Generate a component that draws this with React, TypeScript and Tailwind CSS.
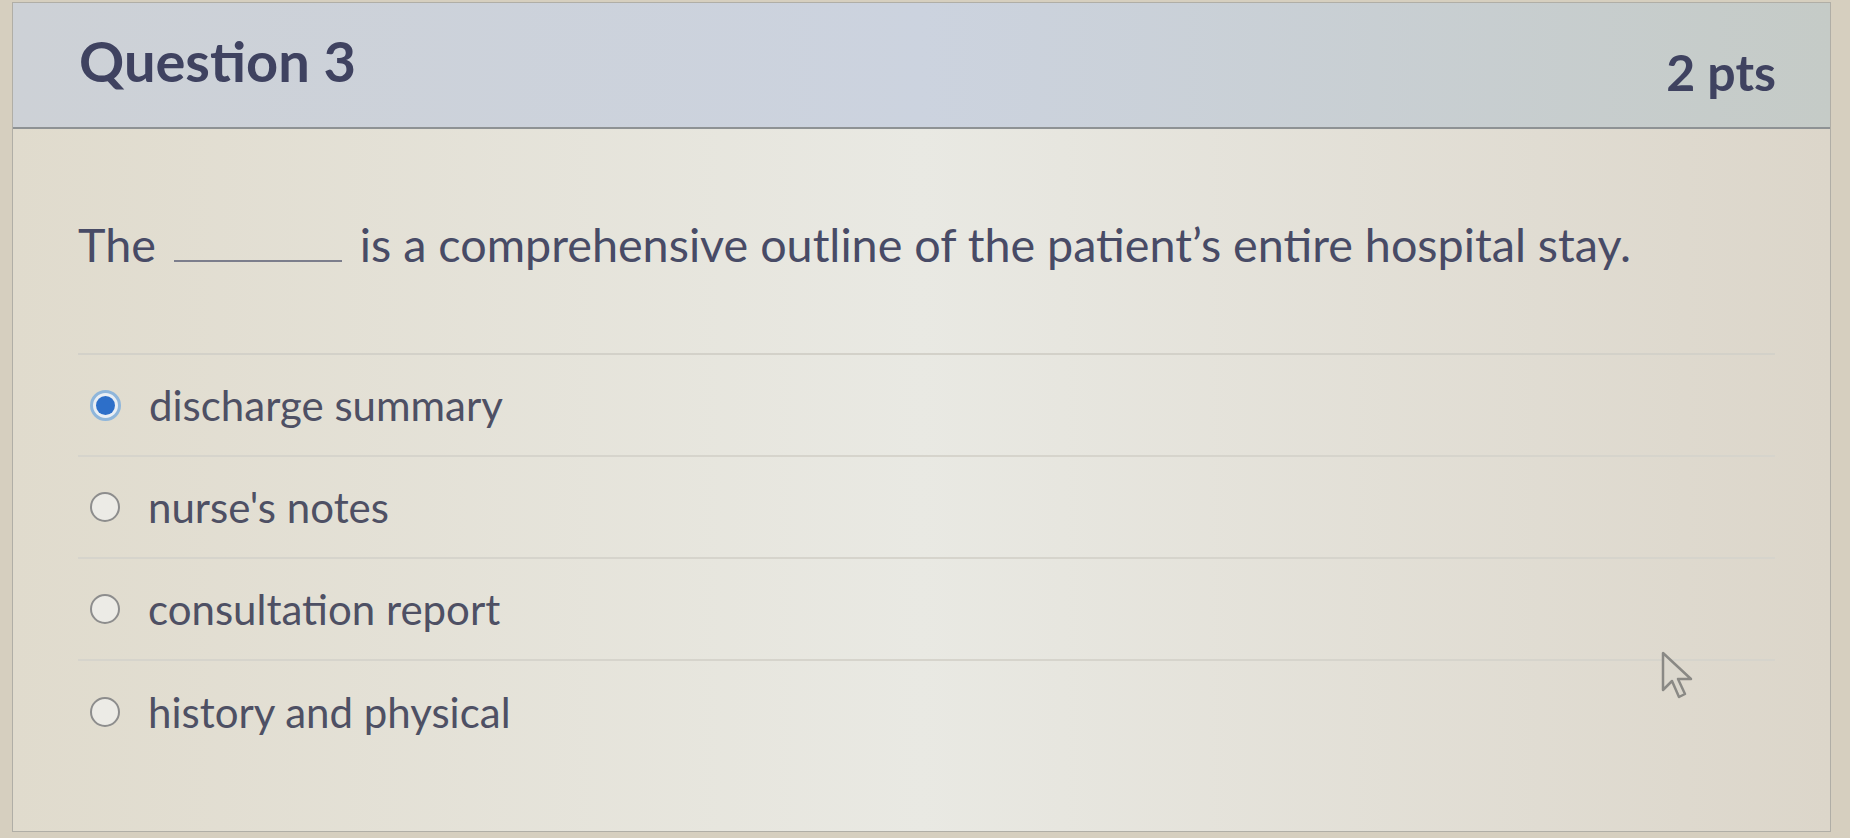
import React from 'react';

const options = [
  { id: 'a', label: 'discharge summary', selected: true },
  { id: 'b', label: "nurse's notes", selected: false },
  { id: 'c', label: 'consultation report', selected: false },
  { id: 'd', label: 'history and physical', selected: false },
];

function Radio({ checked }: { checked: boolean }) {
  if (checked) {
    return (
      <span className="flex h-[31px] w-[31px] shrink-0 items-center justify-center rounded-full border-[3px] border-[#8fb6db] bg-[#e9eef4]">
        <span className="h-[19px] w-[19px] rounded-full bg-[#2d6fc9]" />
      </span>
    );
  }
  return <span className="h-[30px] w-[30px] shrink-0 rounded-full border-2 border-[#8d8d8d] bg-[#ecebe6]" />;
}

function Cursor() {
  return (
    <svg className="absolute left-[1660px] top-[650px]" width="36" height="52" viewBox="0 0 36 52">
      <path
        d="M3 3 L3 40 L12 31 L19 47 L25 44 L18 29 L31 29 Z"
        fill="#dcd8ce"
        stroke="#8a8985"
        strokeWidth="2.5"
        strokeLinejoin="round"
      />
    </svg>
  );
}

export default function App() {
  return (
    <div
      className="relative h-[838px] w-[1850px] overflow-hidden bg-[#d6cfbf] pt-[2px]"
      style={{ fontFamily: 'Lato, "Noto Sans", sans-serif' }}
    >
      <div className="ml-[12px] mr-[19px] h-[830px] border border-[#b0aea6] bg-gradient-to-r from-[#e0dbcd] via-[#e9e9e3] to-[#dcd6ca]">
        {/* header */}
        <div className="flex h-[126px] items-start justify-between border-b-2 border-[#8e9294] bg-gradient-to-r from-[#cdd1d6] via-[#ccd3df] to-[#c5cbc7] pl-[66px] pr-[54px]">
          <h2 className="pt-[30px] text-[56px] font-bold leading-none text-[#3f4260]">Question 3</h2>
          <div className="pt-[44px] text-[50px] font-bold leading-none text-[#3f4260]">2 pts</div>
        </div>

        {/* question body */}
        <div className="pl-[65px] pr-[55px]">
          <p className="pt-[88px] pb-[82px] text-[46.7px] leading-[54px] text-[#484b66]">
            The{' '}
            <span className="mx-[6px] inline-block h-[2px] w-[168px] bg-[#7c7e8c] align-baseline" />{' '}
            is a comprehensive outline of the patient’s entire hospital stay.
          </p>

          <div className="border-t-2 border-[#d3d1c9]">
            {options.map((opt, i) => (
              <label
                key={opt.id}
                className={`flex h-[102px] items-center gap-[28px] pl-[12px] ${
                  i < options.length - 1 ? 'border-b-2 border-[#d6d4cc]' : ''
                }`}
              >
                <Radio checked={opt.selected} />
                <span className="text-[42px] leading-none text-[#4e5064]">{opt.label}</span>
              </label>
            ))}
          </div>
        </div>
      </div>
      <Cursor />
    </div>
  );
}
